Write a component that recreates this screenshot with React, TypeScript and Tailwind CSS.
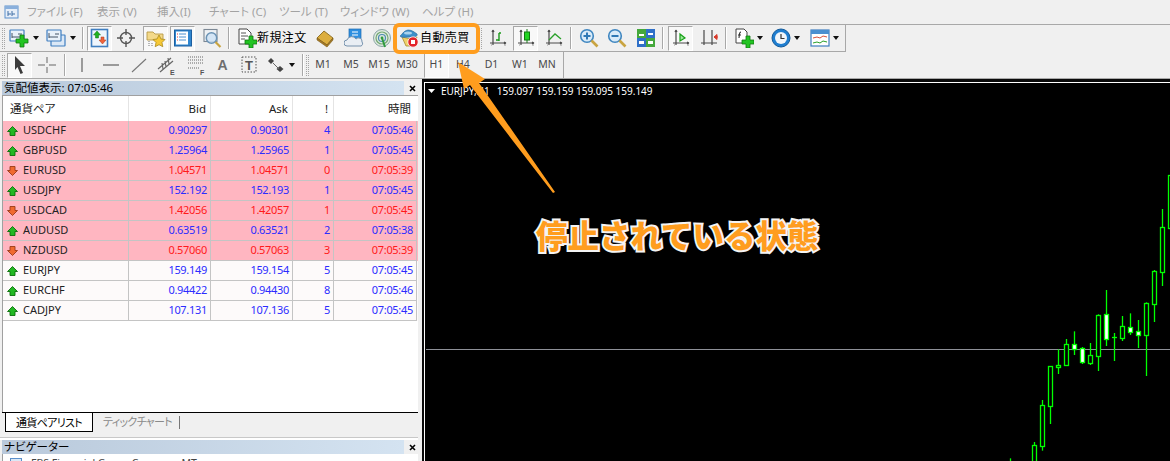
import React from "react";

const FONT = "font-['Noto_Sans','Noto_Sans_CJK_JP',sans-serif]";
const PALT = "[font-feature-settings:'palt']";

const Axes = ({ c = "#4a4a4a" }: { c?: string }) => (
  <g stroke={c} strokeWidth="1.2" fill="none">
    <path d="M5 2v15M2 15h16M5 2l-1 2M5 2l1 2M18 15l-2-1M18 15l-2 1" />
    <path d="M3 17h1M16 17h2" stroke="#999" />
  </g>
);
const S = ({ children, size = 20 }: { children: React.ReactNode; size?: number }) => (
  <svg width={size} height={size} viewBox="0 0 20 20" className="block shrink-0">
    {children}
  </svg>
);
const GreenPlus = ({ x = 0, y = 0 }: { x?: number; y?: number }) => (
  <path
    transform={`translate(${x} ${y})`}
    d="M4 0h4v4h4v4H8v4H4V8H0V4h4z"
    fill="#22c422"
    stroke="#0f7a0f"
    strokeWidth="0.8"
  />
);
const MiniWin = ({ x, y, w, h, fill = "#e8f1fa" }: { x: number; y: number; w: number; h: number; fill?: string }) => (
  <rect x={x} y={y} width={w} height={h} fill={fill} stroke="#3f7ec0" strokeWidth="1.2" rx="0.5" />
);
const NewChartIcon = () => (
  <S>
    <MiniWin x={1} y={2} w={14} h={11} />
    <path d="M3 5v5M3 9h9M9 6h4" stroke="#456" strokeWidth="1" fill="none" />
    <GreenPlus x={7} y={7} />
  </S>
);
const ProfileIcon = () => (
  <S>
    <MiniWin x={5} y={7} w={14} h={11} fill="#dbe8f6" />
    <MiniWin x={1} y={2} w={14} h={11} />
    <path d="M3 5v5M3 9h9M9 6h4" stroke="#456" strokeWidth="1" fill="none" />
  </S>
);
const WatchIcon = () => (
  <S>
    <rect x="1.5" y="1.5" width="16" height="17" fill="#eef5fc" stroke="#3f7ec0" strokeWidth="1.6" />
    <path d="M7 3l3.5 4H8.5v3h-3V7H3.5z" fill="#1fb31f" stroke="#127012" strokeWidth="0.5" />
    <path d="M11 9h3v3h2l-3.5 4L9 12h2z" fill="#f0623a" stroke="#a83a1c" strokeWidth="0.5" />
  </S>
);
const CrossCircle = () => (
  <S>
    <circle cx="10" cy="10" r="5.5" fill="none" stroke="#555" strokeWidth="1.4" />
    <path d="M10 1v6M10 13v6M1 10h6M13 10h6" stroke="#555" strokeWidth="1.4" />
  </S>
);
const FavIcon = () => (
  <S>
    <path d="M1 4h6l2 2h8v6H1z" fill="#f3d98a" stroke="#b89a45" strokeWidth="0.9" />
    <path d="M3 13v5M6 15v3" stroke="#777" strokeDasharray="1 1" />
    <path d="M13 7l2 4 4 .5-3 3 .8 4.2-3.8-2-3.8 2 .8-4.2-3-3 4-.5z" fill="#f6c836" stroke="#a98a20" strokeWidth="0.8" />
  </S>
);
const NavIcon = () => (
  <S>
    <rect x="1.5" y="2" width="17" height="16" fill="#2f86cf" stroke="#1c5e9f" />
    <rect x="3" y="3.5" width="12" height="13" fill="#fff" />
    <path d="M6 6h7M6 9h7M6 12h7" stroke="#4a90cf" />
    <path d="M4 6h1M4 9h1M4 12h1" stroke="#e23a3a" />
  </S>
);
const SearchWin = () => (
  <S>
    <rect x="2" y="1.5" width="13" height="12" fill="#eef1f4" stroke="#7c8894" strokeWidth="1.1" />
    <circle cx="9.5" cy="10" r="5.2" fill="#cfe3f5" fillOpacity="0.85" stroke="#6b93b5" strokeWidth="1.5" />
    <path d="M13.5 14l5 5" stroke="#c9a441" strokeWidth="2.2" />
  </S>
);
const NewOrderIcon = () => (
  <S>
    <path d="M2 1h8l4 4v11H2z" fill="#fff" stroke="#444" strokeWidth="1" />
    <path d="M4 5h5M4 8h7M4 11h4" stroke="#555" strokeWidth="1" />
    <GreenPlus x={8} y={8} />
  </S>
);
const BookIcon = () => (
  <S>
    <path d="M9 3l9 7-6 7-10-7z" fill="#dcae3f" stroke="#8a6a1f" strokeWidth="0.9" />
    <path d="M2 10v2l10 7 6-7v-2l-6 7z" fill="#a87b25" stroke="#7a5a18" strokeWidth="0.6" />
  </S>
);
const CloudIcon = () => (
  <S>
    <rect x="5" y="1" width="12" height="11" fill="#2f8fe0" stroke="#1d6bb0" strokeWidth="0.7" />
    <path d="M8 4h6M8 7h6" stroke="#fff" strokeWidth="1.2" />
    <path d="M3 18a3 3 0 010-6 5 5 0 019-1 3.5 3.5 0 016 3 2.5 2.5 0 01-1 4z" fill="#e9eef4" stroke="#7692ad" strokeWidth="1" />
  </S>
);
const SignalIcon = () => (
  <S>
    <circle cx="10" cy="10" r="8.5" fill="#dfe9df" stroke="#8aa5a5" strokeWidth="1" />
    <circle cx="10" cy="10" r="6" fill="none" stroke="#74a874" strokeWidth="1.2" />
    <circle cx="10" cy="10" r="3.5" fill="none" stroke="#4d8bb0" strokeWidth="1.2" />
    <path d="M10 10l3 9" stroke="#2f9a3f" strokeWidth="2" />
    <circle cx="10" cy="10" r="1.4" fill="#2f9a3f" />
  </S>
);
const AutoIcon = () => (
  <S>
    <path d="M3 9l9 2 6-2-3 9H7z" fill="#efd26b" stroke="#a68a2e" strokeWidth="0.8" />
    <path d="M1 8c2-1 3-5 8-6 4 0 6 2 9 4 1 2-2 3-6 3-5 0-10 1-11-1z" fill="#3d8fc9" stroke="#2a6a9c" strokeWidth="0.7" />
    <ellipse cx="9" cy="5" rx="4" ry="1.6" fill="#a9d2ee" />
    <circle cx="14" cy="14" r="5.2" fill="#e3242b" stroke="#fff" strokeWidth="0.8" />
    <rect x="12" y="12" width="4" height="4" fill="#fff" />
  </S>
);
const BarIcon = () => (
  <S>
    <Axes />
    <path d="M11 5v8M11 12H8M11 5h2" stroke="#1a9a1a" strokeWidth="1.4" fill="none" />
  </S>
);
const CandleIcon = () => (
  <S>
    <Axes />
    <path d="M11 1v14" stroke="#1a7a1a" />
    <rect x="8.5" y="4" width="5" height="8" fill="#22d422" stroke="#0f7a0f" />
  </S>
);
const LineIcon = () => (
  <S>
    <Axes />
    <path d="M5 12l6-6 6 5" stroke="#2aa02a" strokeWidth="1.3" fill="none" />
  </S>
);
const ZoomIcon = ({ minus = false }: { minus?: boolean }) => (
  <S>
    <circle cx="8" cy="8" r="6.3" fill="#d9ebf9" stroke="#3f86c0" strokeWidth="1.6" />
    <path d={minus ? "M4.5 8h7" : "M4.5 8h7M8 4.5v7"} stroke="#2f78b5" strokeWidth="2" />
    <path d="M12.5 12.5l6 6" stroke="#c9a441" strokeWidth="2.6" />
  </S>
);
const TileIcon = () => (
  <S>
    <rect x="1" y="1" width="9" height="9" fill="#45a83c" />
    <rect x="10" y="1" width="9" height="9" fill="#2f70c8" />
    <rect x="1" y="10" width="9" height="9" fill="#2f70c8" />
    <rect x="10" y="10" width="9" height="9" fill="#45a83c" />
    <path d="M3 6h5v2H3zM12 5h5v2h-5zM3 13h5v3H3zM12 13h5v3h-5z" fill="#fff" />
  </S>
);
const ScrollIcon = () => (
  <S>
    <Axes />
    <path d="M9 6l5 4-5 3z" fill="#9de89d" stroke="#17a017" strokeWidth="1.2" />
  </S>
);
const ShiftIcon = () => (
  <S>
    <path d="M4 2v15M12 2v15M1 15h16" stroke="#4a4a4a" strokeWidth="1.2" />
    <path d="M18 9h-4M14 9l3-2.5v5z" fill="#d83a2a" stroke="#d83a2a" />
  </S>
);
const IndicatorIcon = () => (
  <S>
    <path d="M2 1h8l3 3v11H2z" fill="#fff" stroke="#444" strokeWidth="1" />
    <path d="M7 4c-2 0-1.500 2-2 6M4 7h3" stroke="#333" strokeWidth="1.1" fill="none" />
    <GreenPlus x={8} y={8} />
  </S>
);
const ClockIcon = () => (
  <S>
    <circle cx="10" cy="10" r="9" fill="#1f7ed0" stroke="#135a9a" strokeWidth="1" />
    <circle cx="10" cy="10" r="6" fill="#f2f6fa" />
    <path d="M10 6v4.500h3.500" stroke="#333" strokeWidth="1.2" fill="none" />
  </S>
);
const TemplateIcon = () => (
  <S>
    <rect x="1" y="2" width="18" height="16" fill="#fff" stroke="#3f7ec0" strokeWidth="1.2" />
    <rect x="1" y="2" width="18" height="4" fill="#4a8fd0" />
    <path d="M3 10l4-1 3 1 3-2 4 1" stroke="#d8503a" fill="none" />
    <path d="M3 15l4-1 3 1 3-2 4 1" stroke="#2aa02a" fill="none" />
  </S>
);
const ArrowIcon = () => (
  <S>
    <path d="M5 1l10 10h-5l3 7-2.500 1-3-7L5 15z" fill="#3c3c3c" />
  </S>
);
const CrossIcon = () => (
  <S>
    <path d="M10 2v6M10 12v6M1 10h7M12 10h7" stroke="#666" strokeWidth="1" />
  </S>
);
const VIcon = () => (
  <S>
    <path d="M10 3v14" stroke="#555" strokeWidth="1.1" />
  </S>
);
const HIcon = () => (
  <S>
    <path d="M2 10h16" stroke="#555" strokeWidth="1.1" />
  </S>
);
const TrendIcon = () => (
  <S>
    <path d="M3 17L17 4" stroke="#777" strokeWidth="1.1" />
  </S>
);
const ChannelIcon = () => (
  <S>
    <path d="M1 14L14 3M3 17L16 6M5 8l1 6M8 6l1 6M11 3l1 6" stroke="#666" strokeWidth="1.2" />
    <text x="13" y="20" fontSize="7" fontWeight="700" fill="#555" fontFamily="Liberation Sans">E</text>
  </S>
);
const FiboIcon = () => (
  <S>
    <path d="M1 2h16M1 5h16M1 8h16M1 13h12" stroke="#666" strokeDasharray="1 1" />
    <text x="13" y="20" fontSize="7" fontWeight="700" fill="#555" fontFamily="Liberation Sans">F</text>
  </S>
);
const TextAIcon = () => (
  <S>
    <text x="4.500" y="15" fontSize="14" fontWeight="700" fill="#6e6e6e" fontFamily="Liberation Sans">A</text>
  </S>
);
const TextTIcon = () => (
  <S>
    <rect x="3" y="2" width="14" height="15" fill="none" stroke="#555" strokeDasharray="1.500 1.500" />
    <text x="6" y="15" fontSize="13" fontWeight="700" fill="#555" fontFamily="Liberation Sans">T</text>
  </S>
);
const ShapesIcon = () => (
  <S>
    <path d="M4 3l3 3-3 3-3-3z" fill="#444" />
    <path d="M13 11l3.500 3-3.500 3-3.500-3z" fill="#444" />
    <path d="M6 8l6 6" stroke="#666" />
  </S>
);

const Caret = () => (
  <svg width="6" height="4" viewBox="0 0 6 4" className="block">
    <path d="M0 0h6L3 4z" fill="#111" />
  </svg>
);
const Grip = () => (
  <div className="ml-[2px] mr-[1px] h-[21px] w-[3px] shrink-0 border-x border-dotted border-[#a5a5a5]" />
);
const Sep = () => (
  <div className="h-[22px] w-[2px] shrink-0 border-l border-r border-l-[#a8a8a8] border-r-white" />
);
const Close = () => (
  <svg width="7" height="7" viewBox="0 0 7 7" className="block">
    <path d="M1 1l5 5M6 1L1 6" stroke="#000" strokeWidth="1.6" />
  </svg>
);

const btn = "flex h-[25px] shrink-0 items-center justify-center";
const pressed =
  "border border-t-[#a8a8a8] border-l-[#a8a8a8] border-b-white border-r-white bg-[#f8f8f8]";

const menus = [
  ["ファイル (F)", "w-[70px]"],
  ["表示 (V)", "w-[60px]"],
  ["挿入(I)", "w-[52px]"],
  ["チャート (C)", "w-[70px]"],
  ["ツール (T)", "w-[61px]"],
  ["ウィンドウ (W)", "w-[82px]"],
  ["ヘルプ (H)", "w-[60px]"],
];

const rows: [string, boolean, string, string, string, string, boolean][] = [
  ["USDCHF", true, "0.90297", "0.90301", "4", "07:05:46", true],
  ["GBPUSD", true, "1.25964", "1.25965", "1", "07:05:45", true],
  ["EURUSD", false, "1.04571", "1.04571", "0", "07:05:39", true],
  ["USDJPY", true, "152.192", "152.193", "1", "07:05:45", true],
  ["USDCAD", false, "1.42056", "1.42057", "1", "07:05:45", true],
  ["AUDUSD", true, "0.63519", "0.63521", "2", "07:05:38", true],
  ["NZDUSD", false, "0.57060", "0.57063", "3", "07:05:39", true],
  ["EURJPY", true, "159.149", "159.154", "5", "07:05:45", false],
  ["EURCHF", true, "0.94422", "0.94430", "8", "07:05:46", false],
  ["CADJPY", true, "107.131", "107.136", "5", "07:05:45", false],
];

const Up = () => (
  <svg width="11" height="10" viewBox="0 0 11 10" className="block shrink-0">
    <path d="M5.500 0.500L10.500 5.500H8V9.500H3V5.500H0.500Z" fill="#22b822" stroke="#0c6e0c" strokeWidth="0.9" />
  </svg>
);
const Down = () => (
  <svg width="11" height="10" viewBox="0 0 11 10" className="block shrink-0">
    <path d="M5.500 9.500L10.500 4.500H8V0.500H3V4.500H0.500Z" fill="#f06a30" stroke="#9a3a18" strokeWidth="0.9" />
  </svg>
);

const c = (x: number, wt: number, wb: number, bt: number, bb: number, f = false) => ({
  x: 970 + Math.round(x / 3),
  wt: 170 + wt / 3,
  wb: 170 + wb / 3,
  bt: 170 + Math.round(bt / 3),
  bb: 170 + Math.round(bb / 3),
  f,
});
const candles = [
  c(121, 865, 900, 880, 900),
  c(193, 816, 900, 826, 900),
  c(217, 690, 842, 706, 827),
  c(241, 588, 762, 589, 707),
  c(265, 538, 612, 584, 590),
  c(289, 507, 587, 523, 584),
  c(313, 484, 555, 523, 536, true),
  c(337, 531, 582, 535, 575, true),
  c(361, 519, 585, 556, 578),
  c(385, 433, 603, 436, 557),
  c(409, 360, 528, 433, 506, true),
  c(433, 489, 573, 502, 502),
  c(457, 438, 513, 469, 503),
  c(481, 430, 495, 472, 485, true),
  c(505, 450, 534, 484, 494, true),
  c(529, 397, 618, 400, 494),
  c(553, 300, 456, 304, 401),
  c(577, 117, 348, 172, 305),
  c(601, 16, 173, 16, 173),
];

const Panel = ({ title }: { title: string }) => (
  <div className="flex h-[14px] shrink-0 items-center">
    <div className={`${PALT} ml-[2px] flex h-[14px] w-[402px] items-center bg-gradient-to-r from-[#b9c9db] to-[#d4e3f1] pl-[2px] text-[11.5px] leading-none text-black`}>
      {title}
    </div>
    <div className="flex w-[16px] justify-center">
      <Close />
    </div>
  </div>
);

export default function App() {
  return (
    <div className={`${FONT} relative flex h-[461px] w-[1170px] flex-col overflow-hidden bg-[#f0f0f0]`}>
      {/* Menu */}
      <div className={`${PALT} flex h-[25px] shrink-0 items-center border-b border-[#a8a8a8] text-[11.5px] text-[#a3a3a3]`}>
        <div className="ml-[4px] mr-[3px] w-[16px] shrink-0">
          <svg width="16" height="16" viewBox="0 0 16 16" className="block">
            <rect x="1" y="2" width="13" height="12" fill="#e6eef8" stroke="#5b8fcb" />
            <rect x="1" y="2" width="13" height="3" fill="#8ab0dc" />
            <path d="M4 12V7M4 10h3M8 12V7M8 10h3" stroke="#3f6fa5" />
          </svg>
        </div>
        {menus.map(([t, w]) => (
          <div key={t} className={`${w} shrink-0 pl-[4px] whitespace-nowrap`}>
            {t}
          </div>
        ))}
      </div>

      {/* Toolbar 1 */}
      <div className="flex h-[27px] w-[846px] shrink-0 items-center border-r border-b border-[#a8a8a8]">
        <Grip />
        <div className={`${btn} ml-[3px] w-[20px]`}><NewChartIcon /></div>
        <div className={`${btn} ml-[1px] w-[12px]`}><Caret /></div>
        <div className={`${btn} ml-[4px] w-[20px]`}><ProfileIcon /></div>
        <div className={`${btn} ml-[1px] w-[12px]`}><Caret /></div>
        <div className="ml-[3px]"><Sep /></div>
        <div className={`${btn} ${pressed} ml-[3px] w-[25px]`}><WatchIcon /></div>
        <div className={`${btn} w-[28px]`}><CrossCircle /></div>
        <div className={`${btn} ${pressed} ml-[3px] w-[25px]`}><FavIcon /></div>
        <div className={`${btn} ${pressed} ml-[2px] w-[25px]`}><NavIcon /></div>
        <div className={`${btn} ml-[3px] w-[28px]`}><SearchWin /></div>
        <div className="ml-[2px]"><Sep /></div>
        <div className={`${btn} ml-[7px] w-[20px]`}><NewOrderIcon /></div>
        <div className="w-[50px] shrink-0 text-[12px] leading-none tracking-[0.4px] whitespace-nowrap text-black">新規注文</div>
        <div className={`${btn} ml-[4px] w-[28px]`}><BookIcon /></div>
        <div className={`${btn} ml-[1px] w-[28px]`}><CloudIcon /></div>
        <div className={`${btn} w-[28px]`}><SignalIcon /></div>
        <div className={`${btn} w-[26px]`}><AutoIcon /></div>
        <div className="-ml-[2px] w-[56px] shrink-0 text-[12px] leading-none tracking-[0.4px] whitespace-nowrap text-black">自動売買</div>
        <div className="ml-[1px]"><Grip /></div>
        <div className={`${btn} ml-[1px] w-[28px]`}><BarIcon /></div>
        <div className={`${btn} ${pressed} ml-[1px] w-[25px]`}><CandleIcon /></div>
        <div className={`${btn} ml-[2px] w-[28px]`}><LineIcon /></div>
        <div className="ml-[2px]"><Sep /></div>
        <div className={`${btn} ml-[3px] w-[28px]`}><ZoomIcon /></div>
        <div className={`${btn} w-[28px]`}><ZoomIcon minus /></div>
        <div className={`${btn} ml-[1px] w-[28px]`}><TileIcon /></div>
        <div className="ml-[2px]"><Sep /></div>
        <div className={`${btn} ${pressed} ml-[4px] w-[25px]`}><ScrollIcon /></div>
        <div className={`${btn} ml-[3px] w-[28px]`}><ShiftIcon /></div>
        <div className="ml-[1px]"><Sep /></div>
        <div className={`${btn} ml-[7px] w-[20px]`}><IndicatorIcon /></div>
        <div className={`${btn} w-[12px]`}><Caret /></div>
        <div className={`${btn} ml-[5px] w-[20px]`}><ClockIcon /></div>
        <div className={`${btn} w-[12px]`}><Caret /></div>
        <div className={`${btn} ml-[7px] w-[20px]`}><TemplateIcon /></div>
        <div className={`${btn} w-[12px]`}><Caret /></div>
      </div>

      {/* Toolbar 2 */}
      <div className="flex h-[27px] shrink-0 border-b border-[#a8a8a8]">
        <div className="flex h-[26px] w-[564px] items-center border-r border-[#a8a8a8]">
          <Grip />
          <div className={`${btn} ${pressed} ml-[1px] w-[25px]`}><ArrowIcon /></div>
          <div className={`${btn} ml-[1px] w-[28px]`}><CrossIcon /></div>
          <div className="ml-[3px]"><Sep /></div>
          <div className={`${btn} ml-[2px] w-[28px]`}><VIcon /></div>
          <div className={`${btn} ml-[1px] w-[28px]`}><HIcon /></div>
          <div className={`${btn} w-[28px]`}><TrendIcon /></div>
          <div className={`${btn} w-[28px]`}><ChannelIcon /></div>
          <div className={`${btn} ml-[2px] w-[28px]`}><FiboIcon /></div>
          <div className={`${btn} -ml-[2px] w-[28px]`}><TextAIcon /></div>
          <div className={`${btn} -ml-[1px] w-[26px]`}><TextTIcon /></div>
          <div className={`${btn} ml-[5px] w-[20px]`}><ShapesIcon /></div>
          <div className={`${btn} w-[10px]`}><Caret /></div>
          <div className="ml-[5px]"><Sep /></div>
          <Grip />
          {[
            ["M1", false, "-ml-[1px] w-[28px]"],
            ["M5", false, "w-[28px]"],
            ["M15", false, "w-[28px]"],
            ["M30", false, "w-[28px]"],
            ["H1", true, "ml-[3px] w-[25px]"],
            ["H4", false, "w-[28px]"],
            ["D1", false, "w-[29px]"],
            ["W1", false, "w-[28px]"],
            ["MN", false, "w-[26px]"],
          ].map(([t, p, w]) => (
            <div key={t as string} className={`${btn} ${w as string} ${p ? pressed : ""} text-[10.5px] text-[#4a4a4a]`}>
              {t as string}
            </div>
          ))}
        </div>
      </div>

      {/* Main */}
      <div className="flex min-h-0 flex-1">
        {/* Left column */}
        <div className="flex w-[422px] shrink-0 flex-col pt-[2px]">
          <Panel title="気配値表示: 07:05:46" />
          <div className="ml-[2px] mr-[4px] flex h-[317px] shrink-0 flex-col border-t border-l border-[#a0a0a0] bg-white">
            <div className={`${PALT} grid h-[25px] shrink-0 grid-cols-[126px_82px_82px_41px_83px] text-[11.5px] text-[#222]`}>
              <div className="flex items-center border-r border-[#e4e4e4] pl-[7px]">通貨ペア</div>
              <div className="flex items-center justify-end border-r border-[#e4e4e4] pr-[4px]">Bid</div>
              <div className="flex items-center justify-end border-r border-[#e4e4e4] pr-[4px]">Ask</div>
              <div className="flex items-center justify-end border-r border-[#e4e4e4] pr-[5px]">!</div>
              <div className="flex items-center justify-end pr-[6px]">時間</div>
            </div>
            {rows.map(([sym, up, bid, ask, sp, time, pink]) => {
              const col = up ? "text-[#2c2cff]" : "text-[#ff1a1a]";
              const bg = pink ? "bg-[#ffb6c1]" : "bg-[#fdfafa]";
              const cell = `flex items-center justify-end border-r border-b border-[#c4c4c4] pr-[3px] tracking-[-0.3px] ${col}`;
              return (
                <div key={sym} className={`grid h-[20px] shrink-0 grid-cols-[126px_82px_82px_41px_83px] text-[11px] ${bg}`}>
                  <div className="flex items-center gap-[5px] border-r border-b border-[#c4c4c4] pl-[4px] text-[#222]">
                    {up ? <Up /> : <Down />}
                    {sym}
                  </div>
                  <div className={cell}>{bid}</div>
                  <div className={cell}>{ask}</div>
                  <div className={cell}>{sp}</div>
                  <div className={cell}>{time}</div>
                </div>
              );
            })}
          </div>
          {/* Tabs */}
          <div className={`${PALT} ml-[2px] mr-[4px] flex h-[22px] shrink-0 items-start border-t border-black pl-[3px] text-[11px] leading-none tracking-[-0.7px]`}>
            <div className="flex h-[19px] w-[88px] items-center justify-center border-x border-b border-black bg-white text-black">
              通貨ペアリスト
            </div>
            <div className="ml-[10px] flex h-[17px] w-[67px] items-center whitespace-nowrap text-[#8a8a8a]">ティックチャート</div>
            <div className="ml-[9px] mt-[3px] h-[13px] w-px bg-[#777]" />
          </div>
          <div className="mr-[4px] mt-[3px] h-[3px] shrink-0 border-t border-[#c8c8c8] bg-white" />
          <Panel title="ナビゲーター" />
          <div className="ml-[2px] mr-[4px] flex min-h-0 flex-1 items-start overflow-hidden border-l border-[#a0a0a0] bg-white pl-[7px] pt-[4px] text-[10.5px] leading-none text-[#444]">
            <div className="mr-[9px] h-[11px] w-[12px] shrink-0 border border-[#5b8fcb] bg-[#dbe8f6]" />
            <span className="whitespace-nowrap">FBS Financial Group Company MT</span>
          </div>
        </div>

        {/* Chart */}
        <div className="min-w-0 flex-1 border-t-[3px] border-l-[2px] border-[#0a0a0a] bg-[#f0f0f0]">
          <div className="relative h-full w-full overflow-hidden border-t border-l border-white bg-black">
            <svg width="745" height="378" viewBox="425 83 745 378" className="block">
              <path d="M426 349.500H1170" stroke="#8e9098" strokeWidth="1" />
              {candles.map((d) => (
                <g key={d.x}>
                  <path d={`M${d.x + 0.5} ${d.wt}V${d.wb}`} stroke="#00ff00" strokeWidth="1.3" />
                  {d.bt === d.bb ? (
                    <path d={`M${d.x - 2} ${d.bt + 0.5}H${d.x + 3}`} stroke="#00ff00" strokeWidth="1.3" />
                  ) : (
                    <rect
                      x={d.x - 1.5}
                      y={d.bt + 0.5}
                      width={4}
                      height={d.bb - d.bt}
                      fill={d.f ? "#ffffff" : "#000000"}
                      stroke="#00ff00"
                      strokeWidth="1.3"
                    />
                  )}
                </g>
              ))}
            </svg>
            <div className="absolute left-[3px] top-[3px] flex items-center text-[10px] leading-none whitespace-nowrap text-white">
              <svg width="7" height="4" viewBox="0 0 7 4" className="mr-[6px] block">
                <path d="M0 0h7L3.500 4z" fill="#fff" />
              </svg>
              <span className="mr-[7px]">EURJPY,H1</span>
              <span>159.097 159.159 159.095 159.149</span>
            </div>
          </div>
        </div>
      </div>

      {/* Annotation overlays */}
      <div className="pointer-events-none absolute left-[393px] top-[23px] h-[31px] w-[87px] rounded-[6px] border-[4px] border-[#ff9d1e]" />
      <svg width="1170" height="461" viewBox="0 0 1170 461" className="pointer-events-none absolute left-0 top-0 block">
        <path d="M458 62L485 79L479 83L555 192L553 193L470 85L464 89Z" fill="#ff9d1e" />
      </svg>
      <div className="pointer-events-none absolute left-[536px] top-[212px] font-['Noto_Sans_CJK_JP',sans-serif] text-[31.5px] leading-[44px] font-black whitespace-nowrap text-[#ff9d1e] [-webkit-text-stroke:4px_#f4f4f4] [paint-order:stroke_fill]">
        停止されている状態
      </div>
    </div>
  );
}
